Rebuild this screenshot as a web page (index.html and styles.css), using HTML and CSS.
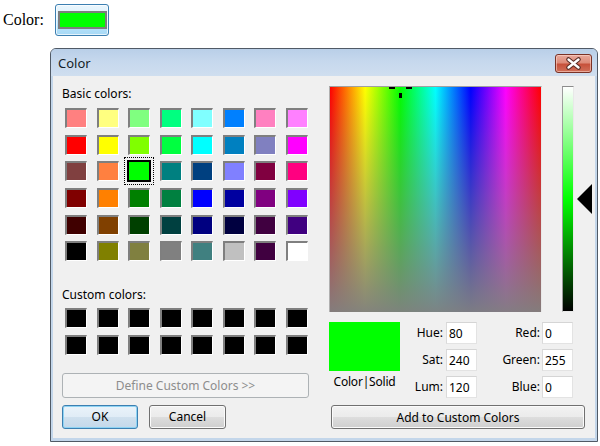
FILE: index.html
```html
<!DOCTYPE html>
<html>
<head>
<meta charset="utf-8">
<title>Color</title>
<link rel="stylesheet" href="styles.css">
</head>
<body>
<div class="picker">
  <span class="picker-label">Color:</span>
  <button class="picker-btn"><span class="picker-swatch"></span></button>
</div>

<div class="dialog">
  <div class="titlebar">
    <span class="title">Color</span>
    <button class="close" aria-label="Close">
      <svg width="37" height="19" viewBox="0 0 37 19">
        <path d="M13.5 5.5 L23.5 13.5 M23.5 5.5 L13.5 13.5" stroke="#5a2c24" stroke-width="4.6" stroke-linecap="round"/>
        <path d="M13.5 5.5 L23.5 13.5 M23.5 5.5 L13.5 13.5" stroke="#ffffff" stroke-width="2.4" stroke-linecap="round"/>
      </svg>
    </button>
  </div>

  <div class="client">
    <div class="left">
      <div class="label">Basic colors:</div>
      <div class="swatches basic">
        <span class="sw" style="background:#ff8080"></span>
        <span class="sw" style="background:#ffff80"></span>
        <span class="sw" style="background:#80ff80"></span>
        <span class="sw" style="background:#00ff80"></span>
        <span class="sw" style="background:#80ffff"></span>
        <span class="sw" style="background:#0080ff"></span>
        <span class="sw" style="background:#ff80c0"></span>
        <span class="sw" style="background:#ff80ff"></span>

        <span class="sw" style="background:#ff0000"></span>
        <span class="sw" style="background:#ffff00"></span>
        <span class="sw" style="background:#80ff00"></span>
        <span class="sw" style="background:#00ff40"></span>
        <span class="sw" style="background:#00ffff"></span>
        <span class="sw" style="background:#0080c0"></span>
        <span class="sw" style="background:#8080c0"></span>
        <span class="sw" style="background:#ff00ff"></span>

        <span class="sw" style="background:#804040"></span>
        <span class="sw" style="background:#ff8040"></span>
        <span class="sw sel" style="background:#00ff00"></span>
        <span class="sw" style="background:#008080"></span>
        <span class="sw" style="background:#004080"></span>
        <span class="sw" style="background:#8080ff"></span>
        <span class="sw" style="background:#800040"></span>
        <span class="sw" style="background:#ff0080"></span>

        <span class="sw" style="background:#800000"></span>
        <span class="sw" style="background:#ff8000"></span>
        <span class="sw" style="background:#008000"></span>
        <span class="sw" style="background:#008040"></span>
        <span class="sw" style="background:#0000ff"></span>
        <span class="sw" style="background:#0000a0"></span>
        <span class="sw" style="background:#800080"></span>
        <span class="sw" style="background:#8000ff"></span>

        <span class="sw" style="background:#400000"></span>
        <span class="sw" style="background:#804000"></span>
        <span class="sw" style="background:#004000"></span>
        <span class="sw" style="background:#004040"></span>
        <span class="sw" style="background:#000080"></span>
        <span class="sw" style="background:#000040"></span>
        <span class="sw" style="background:#400040"></span>
        <span class="sw" style="background:#400080"></span>

        <span class="sw" style="background:#000000"></span>
        <span class="sw" style="background:#808000"></span>
        <span class="sw" style="background:#808040"></span>
        <span class="sw" style="background:#808080"></span>
        <span class="sw" style="background:#408080"></span>
        <span class="sw" style="background:#c0c0c0"></span>
        <span class="sw" style="background:#400040"></span>
        <span class="sw" style="background:#ffffff"></span>
      </div>

      <div class="label custom-label">Custom colors:</div>
      <div class="swatches custom">
        <span class="sw black"></span><span class="sw black"></span><span class="sw black"></span><span class="sw black"></span>
        <span class="sw black"></span><span class="sw black"></span><span class="sw black"></span><span class="sw black"></span>
        <span class="sw black"></span><span class="sw black"></span><span class="sw black"></span><span class="sw black"></span>
        <span class="sw black"></span><span class="sw black"></span><span class="sw black"></span><span class="sw black"></span>
      </div>

      <button class="btn disabled define" disabled>Define Custom Colors &gt;&gt;</button>
      <div class="btn-row">
        <button class="btn default ok">OK</button>
        <button class="btn cancel">Cancel</button>
      </div>
    </div>

    <div class="right">
      <div class="spec-row">
        <div class="spectrum">
          <svg class="cross" width="213" height="226" viewBox="0 0 213 226">
            <rect x="60" y="0" width="6" height="3" fill="#000"/>
            <rect x="77" y="0" width="6" height="3" fill="#000"/>
            <rect x="70" y="7" width="3" height="5" fill="#000"/>
          </svg>
        </div>
        <div class="lum"></div>
        <svg class="arrow" width="15" height="30" viewBox="0 0 15 30">
          <polygon points="0,15 15,0 15,30" fill="#000"/>
        </svg>
      </div>

      <div class="fields-row">
        <div class="solid-box">
          <div class="solid"></div>
          <div class="solid-label">Color|Solid</div>
        </div>
        <div class="fields">
          <label class="flabel">Hue:</label><input class="fin" value="80">
          <label class="flabel l2">Red:</label><input class="fin" value="0">
          <label class="flabel">Sat:</label><input class="fin" value="240">
          <label class="flabel l2">Green:</label><input class="fin" value="255">
          <label class="flabel">Lum:</label><input class="fin" value="120">
          <label class="flabel l2">Blue:</label><input class="fin" value="0">
        </div>
      </div>

      <button class="btn add">Add to Custom Colors</button>
    </div>
  </div>
</div>
</body>
</html>
```

FILE: styles.css
```css
* {
  box-sizing: border-box;
}

html,
body {
  margin: 0;
  padding: 0;
  background: #ffffff;
}

body {
  width: 600px;
  height: 446px;
  overflow: hidden;
  font-family: "Noto Sans", "Open Sans", sans-serif;
  font-size: 12px;
  color: #000;
}

/* ---------- page picker ---------- */
.picker {
  display: flex;
  align-items: center;
  padding: 4px 0 0 3px;
  height: 36px;
}

.picker-label {
  font-family: "Liberation Serif", serif;
  font-size: 16px;
  width: 52px;
}

.picker-btn {
  width: 54px;
  height: 32px;
  padding: 0;
  border: 1px solid #3c7fb1;
  border-radius: 3px;
  background: linear-gradient(#eaf6fd 0%, #d9f0fc 50%, #bee6fd 51%, #a7d9f5 100%);
  box-shadow: inset 0 0 0 1px rgba(255, 255, 255, 0.7);
  display: flex;
  align-items: center;
  justify-content: center;
}

.picker-swatch {
  display: block;
  width: 49px;
  height: 18px;
  background: #00ff00;
  border: 2px solid #7d7d7d;
}

/* ---------- dialog frame ---------- */
.dialog {
  margin: 12px 0 0 50px;
  width: 548px;
  height: 394px;
  border: 1px solid #505a66;
  border-radius: 6px 6px 0 0;
  background: #c3d6ea;
  display: flex;
  flex-direction: column;
  overflow: hidden;
}

.titlebar {
  height: 27px;
  flex: none;
  display: flex;
  align-items: flex-start;
  justify-content: space-between;
  background: linear-gradient(#b9cfe8 0%, #c6d8ed 45%, #cfdeef 100%);
  padding: 0 5px 0 7px;
}

.title {
  font-family: "Noto Sans", sans-serif;
  font-size: 13px;
  line-height: 27px;
  padding-top: 1px;
  color: #141e28;
}

.close {
  margin-top: 5px;
  width: 37px;
  height: 19px;
  padding: 0;
  border: 1px solid #7a3226;
  border-radius: 3px;
  background: linear-gradient(#e9a99c 0%, #dd8b79 45%, #c7513b 55%, #d0705a 100%);
  box-shadow: inset 0 0 0 1px rgba(255, 220, 210, 0.55);
  display: flex;
  align-items: center;
  justify-content: center;
}

.close svg {
  display: block;
  margin: -1px;
}

.client {
  flex: none;
  margin: 0 2px 0 2px;
  height: 362px;
  background: #f0f0f0;
  padding: 10px 2px 0 9px;
  display: grid;
  grid-template-columns: 247px 263px;
  column-gap: 20px;
  align-items: start;
}

/* ---------- left column ---------- */
.left {
  display: flex;
  flex-direction: column;
}

.label {
  height: 16px;
  line-height: 16px;
  white-space: nowrap;
  color: #000;
}

.swatches {
  display: grid;
  grid-template-columns: repeat(8, 22px);
  column-gap: 9.57px;
  padding-left: 3px;
}

.basic {
  margin-top: 6px;
  grid-auto-rows: 20px;
  row-gap: 6.7px;
}

.custom-label {
  margin-top: 25.5px;
}

.custom {
  margin-top: 5px;
  grid-auto-rows: 20px;
  row-gap: 7px;
}

.sw {
  display: block;
  width: 22px;
  height: 20px;
  border-style: solid;
  border-width: 2px 1px 1px 2px;
  border-color: #7f7f7f #ffffff #ffffff #7f7f7f;
}

.sw.black {
  background: #000;
}

.sw.sel {
  border: 1px solid #000;
  box-shadow: 0 0 0 1px #000;
  outline: 1px dotted #000;
  outline-offset: 3px;
}

/* ---------- buttons ---------- */
.btn {
  font-family: "Noto Sans", "Open Sans", sans-serif;
  font-size: 12px;
  color: #000;
  height: 24px;
  padding: 0;
  border: 1px solid #707070;
  border-radius: 3px;
  background: linear-gradient(#f2f2f2 0%, #ebebeb 50%, #dddddd 51%, #cfcfcf 100%);
  box-shadow: inset 0 0 0 1px #fbfbfb;
}

.btn.disabled {
  color: #8d8d8d;
  border-color: #adb2b5;
  background: #f4f4f4;
  box-shadow: none;
}

.define {
  margin-top: 18px;
  height: 25px;
  width: 247px;
}

.btn-row {
  margin-top: 7px;
  display: flex;
  gap: 11px;
}

.ok {
  width: 76px;
}

.cancel {
  width: 77px;
}

.btn.default {
  border-color: #3c7fb1;
  background: linear-gradient(#eaf3fa 0%, #e0ecf6 50%, #cfe0ee 51%, #c4d8ea 100%);
  box-shadow: inset 0 0 0 1px #8ed3f3;
}

/* ---------- right column ---------- */
.right {
  display: flex;
  flex-direction: column;
}

.spec-row {
  display: flex;
  height: 226px;
}

.spectrum {
  position: relative;
  width: 213px;
  height: 226px;
  overflow: hidden;
  border-style: solid;
  border-width: 1px 1px 0 1px;
  border-color: #a0a0a0 #e8e8e8 #e8e8e8 #b0b0b0;
  background:
    linear-gradient(to bottom, rgba(128, 128, 128, 0) 0%, rgba(128, 128, 128, 0.97) 100%),
    linear-gradient(to right, #ff0000 0%, #ffff00 16.67%, #00ff00 33.33%, #00ffff 50%, #0000ff 66.67%, #ff00ff 83.33%, #ff0000 100%);
}

.cross {
  position: absolute;
  left: -1px;
  top: -1px;
}

.lum {
  margin-left: 20px;
  width: 12px;
  height: 226px;
  border-style: solid;
  border-width: 1px 1px 1px 1px;
  border-color: #8c8c8c #e8e8e8 #e8e8e8 #9a9a9a;
  background: linear-gradient(to bottom, #ffffff 0%, #00ff00 50%, #000000 100%);
}

.arrow {
  display: block;
  margin-left: 3px;
  margin-top: 98px;
}

.fields-row {
  margin-top: 10px;
  display: flex;
}

.solid-box {
  width: 71px;
}

.solid {
  height: 49px;
  background: #00ff00;
}

.solid-label {
  margin-top: 3px;
  line-height: 16px;
  text-align: center;
  white-space: nowrap;
  letter-spacing: -0.2px;
}

.fields {
  display: grid;
  grid-template-columns: 46px 31px 65px 31px;
  grid-auto-rows: 22px;
  row-gap: 5px;
}

.flabel {
  text-align: right;
  padding-right: 3px;
  line-height: 22px;
  white-space: nowrap;
}

.flabel.l2 {
  padding-right: 2px;
}

.fin {
  width: 31px;
  height: 22px;
  margin: 0;
  padding: 0 0 0 2px;
  font-family: "Noto Sans", "Open Sans", sans-serif;
  font-size: 12px;
  color: #000;
  background: #ffffff;
  border: 1px solid;
  border-color: #d5d5d5 #e3e3e3 #e3e3e3 #dadada;
  outline: none;
}

.add {
  margin-top: 7px;
  margin-left: 2px;
  width: 254px;
}
```
